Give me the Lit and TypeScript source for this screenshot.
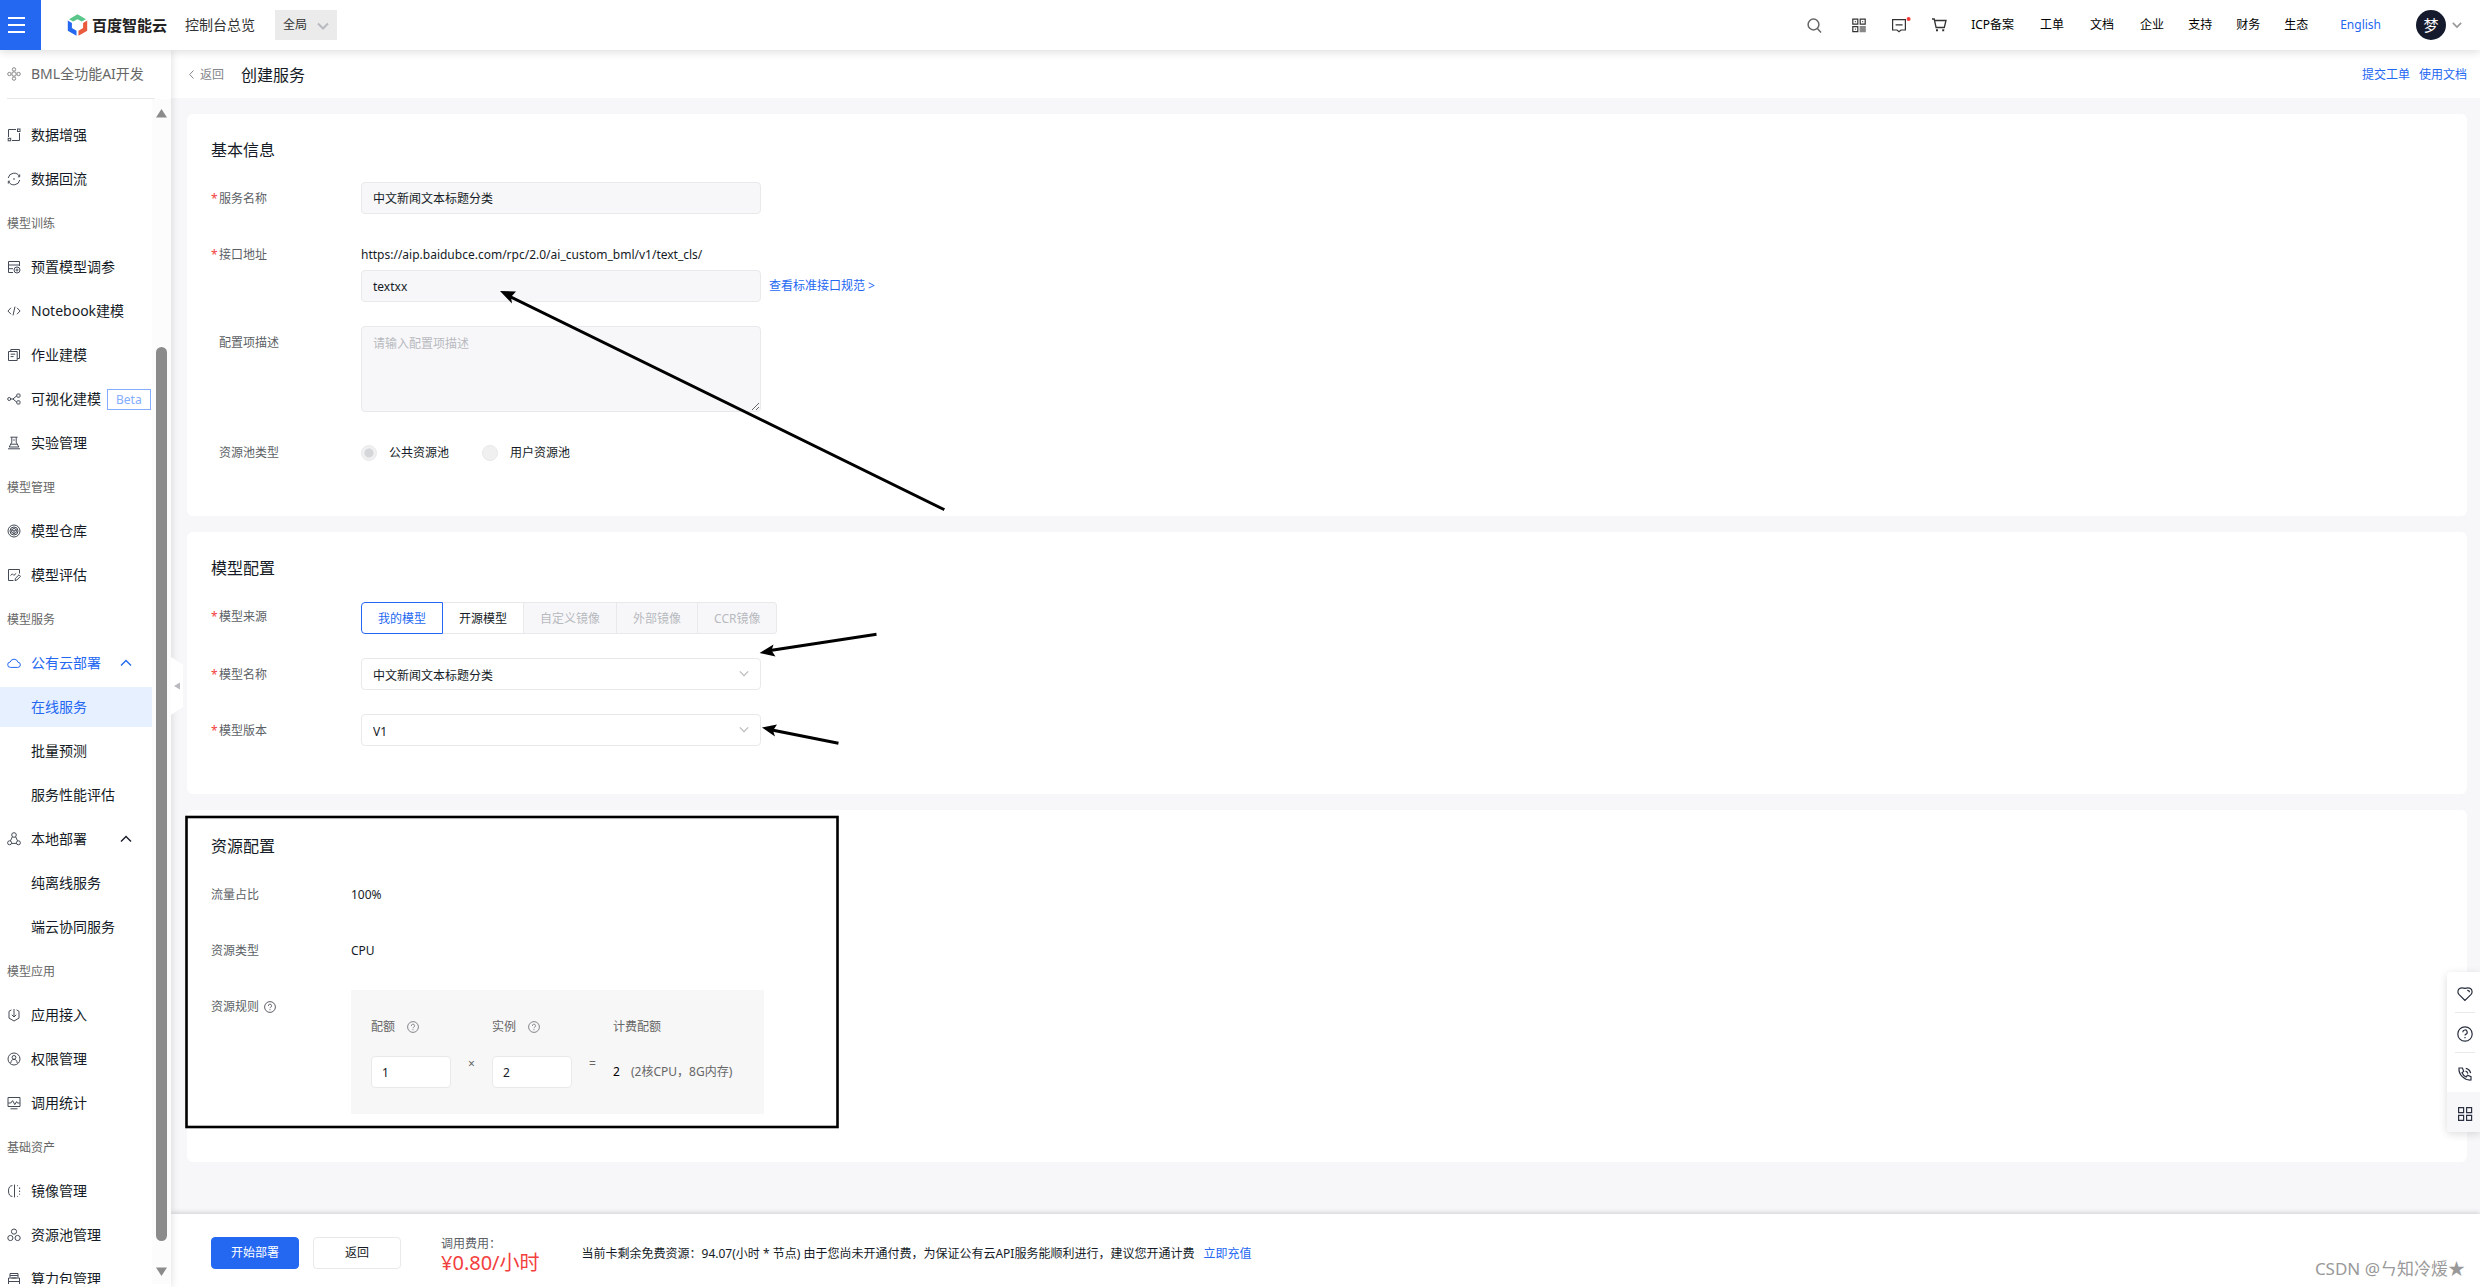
import { LitElement, html, svg, css, nothing, SVGTemplateResult } from "lit";
import { customElement, state } from "lit/decorators.js";
import { classMap } from "lit/directives/class-map.js";

type Entry = { kind: "item" | "group" | "parent" | "child"; text: string; icon?: string; tag?: string };

const MENU: Entry[] = [
  { kind: "item", text: "数据增强", icon: "augment" },
  { kind: "item", text: "数据回流", icon: "reflow" },
  { kind: "group", text: "模型训练" },
  { kind: "item", text: "预置模型调参", icon: "preset" },
  { kind: "item", text: "Notebook建模", icon: "code" },
  { kind: "item", text: "作业建模", icon: "job" },
  { kind: "item", text: "可视化建模", icon: "share", tag: "Beta" },
  { kind: "item", text: "实验管理", icon: "flask" },
  { kind: "group", text: "模型管理" },
  { kind: "item", text: "模型仓库", icon: "repo" },
  { kind: "item", text: "模型评估", icon: "evaluate" },
  { kind: "group", text: "模型服务" },
  { kind: "parent", text: "公有云部署", icon: "cloud" },
  { kind: "child", text: "在线服务" },
  { kind: "child", text: "批量预测" },
  { kind: "child", text: "服务性能评估" },
  { kind: "parent", text: "本地部署", icon: "local" },
  { kind: "child", text: "纯离线服务" },
  { kind: "child", text: "端云协同服务" },
  { kind: "group", text: "模型应用" },
  { kind: "item", text: "应用接入", icon: "access" },
  { kind: "item", text: "权限管理", icon: "user" },
  { kind: "item", text: "调用统计", icon: "chart" },
  { kind: "group", text: "基础资产" },
  { kind: "item", text: "镜像管理", icon: "mirror" },
  { kind: "item", text: "资源池管理", icon: "pool" },
  { kind: "item", text: "算力包管理", icon: "pack" },
];

/* All menu glyphs share a 14 × 14 grid. */
const GLYPHS: Record<string, SVGTemplateResult> = {
  product: svg`<rect x="5" y="5" width="4" height="4" rx="1"/><circle cx="7" cy="2.4" r="1.7"/><circle cx="7" cy="11.6" r="1.7"/><circle cx="2.4" cy="7" r="1.7"/><circle cx="11.6" cy="7" r="1.7"/>`,
  augment: svg`<path d="M1.500 9V1.500H9M5 12.500h7.500V5"/><rect x="10.500" y="1" width="2.500" height="2.500"/><rect x="1.200" y="10.300" width="2.500" height="2.500"/>`,
  reflow: svg`<path d="M1.200 6A6 6 0 0 1 12.400 4.400M12.800 8A6 6 0 0 1 1.600 9.600M12.700 2.400v2.400h-1.800M1.300 11.600V9.200h1.800"/><path d="M6 7h2" />`,
  preset: svg`<path d="M12.500 6V1.500h-11v11H6M1.500 5h11M1.500 8.700H6"/><circle cx="10" cy="10" r="3"/><circle cx="10" cy="10" r="1"/>`,
  code: svg`<path d="M4 3.800.9 7 4 10.200M10 3.800 13.100 7 10 10.200M8 2.600 6 11.400"/>`,
  job: svg`<path d="M1.500 3.500h8.700v9H1.500zM3.800 3.500v-2h8.700v9h-2.300M3.600 6.200h4.600M3.600 8.600h3"/>`,
  share: svg`<circle cx="2.200" cy="7" r="1.500"/><rect x="9.800" y="2" width="3.200" height="3.200" rx=".8"/><rect x="9.800" y="8.800" width="3.200" height="3.200" rx=".8"/><path d="M3.700 7h2.200l3.900-3.200M5.900 7l3.900 3.200"/>`,
  flask: svg`<path d="M3.400 1.200h7.200M4.800 1.200v5L2.200 11h9.600L9.200 6.200v-5M3.800 8.200h6.400M1 12.800h12M6.200 4h1.600"/>`,
  repo: svg`<circle cx="7" cy="7" r="6"/><circle cx="7" cy="7" r="4"/><path d="m7 4.400 2.300 1.300v2.600L7 9.600 4.700 8.300V5.700zM4.700 5.700 7 7l2.300-1.300M7 7v2.600"/>`,
  evaluate: svg`<path d="M12.500 5.500v-4h-11v11h5M3.600 7.600 5.300 5.800l1.500 1.600 2.400-2M8 12.600l.4-2.200L12 6.800l1.500 1.500L9.900 12z"/>`,
  cloud: svg`<path d="M3.600 11.400a2.700 2.700 0 0 1-.4-5.400 4 4 0 0 1 7.700.2 2.600 2.600 0 0 1-.3 5.200z"/>`,
  local: svg`<circle cx="7" cy="3" r="2.300"/><circle cx="2.600" cy="10.800" r="2"/><circle cx="11.400" cy="10.800" r="2"/><path d="M5.400 4.800 3.400 8.900M8.600 4.800l2 4.100M4.700 11.400h4.600"/>`,
  access: svg`<path d="M4.400 1.900 2 3.300v6.800l5 2.900 5-2.900V3.300L9.600 1.900M7 1v8M4.800 6.800 7 9l2.200-2.200"/>`,
  user: svg`<circle cx="7" cy="7" r="6"/><circle cx="7" cy="5.400" r="1.900"/><path d="M3.800 11c.2-2.400 1.300-3.600 3.200-3.600s3 1.200 3.200 3.600"/>`,
  chart: svg`<path d="M1 1.500h12v9H1zM3.500 12.800h7M1.200 7h2.600L5.600 4.600l2.200 4 1.800-3 .8 1.400h2.400"/>`,
  mirror: svg`<path d="M5.400 1.600C3 1.600 1.500 3.400 1.500 7s1.500 5.400 3.900 5.400M7.500 .6v12.800M10 1.600h.8M12.600 3.500v1.500M12.600 6.500v1.500M12.600 9.600v1M10 12.400h.8"/>`,
  pool: svg`<circle cx="7" cy="3.600" r="2.600"/><circle cx="3.400" cy="10" r="2.600"/><circle cx="10.600" cy="10" r="2.600"/>`,
  pack: svg`<path d="M3 5.500V1.500h8v4M3 3.500h8M1.500 13V6h11v7M1 9.500h12M4.500 6h5"/>`,
};

const glyph = (name: string) => html`
  <svg class="glyph" viewBox="0 0 14 14" aria-hidden="true">${GLYPHS[name]}</svg>`;

const help = () => html`
  <svg class="help" viewBox="0 0 12 12" aria-hidden="true">
    <circle cx="6" cy="6" r="5.4" />
    <path d="M4.400 4.900A1.600 1.600 0 1 1 6.500 6.300Q6 6.500 6 7.200M6 8.200v1" />
  </svg>`;

const chevron = (cls: string) => html`
  <svg class=${cls} viewBox="0 0 12 8" aria-hidden="true"><path d="M1 1.500 6 6.500 11 1.500" /></svg>`;

const base = css`
  * { box-sizing: border-box; }
  a { color: #2468f2; text-decoration: none; }
  button, input, select, textarea { font: inherit; color: inherit; margin: 0; }
  svg { display: block; flex: none; fill: none; }
`;

@customElement("top-bar")
class TopBar extends LitElement {
  static styles = [base, css`
    :host { display: flex; align-items: center; height: 50px; background: #fff; color: #151b26;
      box-shadow: 0 2px 8px rgba(7, 12, 20, .14); position: relative; z-index: 3; }
    .burger { width: 41px; height: 50px; border: 0; padding: 0 0 0 8px; background: #2468f2; }
    .burger svg { width: 17px; height: 16px; stroke: #fff; stroke-width: 2; }
    .brand { display: flex; align-items: center; gap: 4px; margin-left: 26px; color: #222; font-size: 15px; font-weight: 700; }
    .brand svg { width: 21px; height: 22px; }
    .overview { margin-left: 18px; color: #333; font-size: 14px; }
    .region { position: relative; margin-left: 20px; }
    .region select { display: block; width: 62px; height: 30px; padding: 0 8px; border: 0; border-radius: 0;
      background: #ebebeb; color: #333; appearance: none; }
    .down { width: 12px; height: 8px; stroke: #b8babf; stroke-width: 2; }
    .region .down { position: absolute; right: 8px; top: 12px; pointer-events: none; }
    .tools { display: flex; align-items: center; gap: 24px; margin-left: auto; }
    .tools button { display: block; border: 0; padding: 0; background: none; }
    .tools button svg { width: 16px; height: 16px; stroke: #333; overflow: visible; }
    .tools .find { margin-right: 5px; }
    .tools .find svg { stroke: #666; }
    .links { display: flex; gap: 26px; }
    .links.near { gap: 24px; }
    .links a { color: #000; }
    .lang { margin-left: 8px; }
    .account { display: flex; align-items: center; gap: 6px; margin: 0 18px 0 11px; }
    .avatar { width: 30px; height: 30px; line-height: 30px; border-radius: 50%; background: #151b2d; color: #fff;
      text-align: center; font-size: 15px; }
    .account .down { width: 10px; stroke: #999; }
  `];

  render() {
    return html`
      <button class="burger" aria-label="导航菜单">
        <svg viewBox="0 0 17 16"><path d="M0 1h17M0 8h17M0 15h17" /></svg>
      </button>
      <a class="brand" href="#">
        <svg viewBox="0 0 21 22" aria-hidden="true">
          <path fill="#5ac68a" d="M2 5.200 10.500.3 19 5.200 14.800 7.600 10.500 5.200 6.200 7.600z" />
          <path fill="#2468f2" d="M.8 6.600 4.900 9v5l4.600 2.700v5L.8 16.700z" />
          <path fill="#ea5a3d" d="M20.200 6.600 16.100 9v5l-4.600 2.700v5l8.700-5z" />
        </svg>
        <span>百度智能云</span>
      </a>
      <span class="overview">控制台总览</span>
      <label class="region">
        <select aria-label="区域"><option>全局</option></select>
        ${chevron("down")}
      </label>
      <nav class="tools">
        <button class="find" aria-label="搜索"><svg viewBox="0 0 16 16" stroke-width="1.5"><circle cx="7.500" cy="7.500" r="5.400" /><path d="m11.400 11.400 3.600 4" /></svg></button>
        <button aria-label="二维码"><svg viewBox="0 0 16 16" stroke-width="1.2">
          <path d="M1.800 2.200h5v5h-5zM9.200 2.200h5v5h-5zM1.800 9.600h5v5h-5zM3.900 4.700h.9M11.300 4.700h.9M3.900 12.100h.9" />
          <path fill="#888" stroke="#888" d="M9.200 9.600h5v5h-5z" /></svg></button>
        <button aria-label="消息"><svg viewBox="0 0 16 16" stroke-width="1.2">
          <path d="M1.600 2.600h12.800v10.400H10L8 14.800 6 13H1.600zM4.600 7.800h7" />
          <circle cx="17.600" cy="2" r="2" fill="#f33e3e" stroke="none" /></svg></button>
        <button aria-label="购物车"><svg viewBox="0 0 16 16" stroke-width="1.300">
          <path d="M1 2h2.200l1.900 8.500h8.200L15 3.500H3.600" />
          <path d="M5 13.300h2M11.200 13.300h2" stroke-width="2" /></svg></button>
        <span class="links">
          ${["ICP备案", "工单", "文档", "企业"].map((t) => html`<a href="#">${t}</a>`)}
        </span>
        <span class="links near">
          ${["支持", "财务", "生态"].map((t) => html`<a href="#">${t}</a>`)}
        </span>
        <a class="lang" href="#">English</a>
        <span class="account"><span class="avatar">梦</span>${chevron("down")}</span>
      </nav>`;
  }
}

@customElement("side-menu")
class SideMenu extends LitElement {
  @state() private active = "在线服务";

  static styles = [base, css`
    :host { display: flex; flex-direction: column; width: 171px; flex: none; background: #fff; color: #151b26;
      font-size: 14px; box-shadow: 0 0 8px rgba(7, 12, 20, .14); position: relative; z-index: 2; }
    .product { display: flex; align-items: center; gap: 10px; height: 49px; margin: 0 16px 0 7px;
      border-bottom: 1px solid #e8e9eb; color: #666; white-space: nowrap; }
    .glyph { width: 14px; height: 14px; stroke: #444a56; stroke-width: 1; }
    .product .glyph { stroke: #888; }
    .body { display: flex; flex: 1; min-height: 0; margin-bottom: 3px; }
    .list { flex: 1; display: flex; flex-direction: column; gap: 4px; overflow: hidden; padding-top: 16px; }
    .row { display: flex; align-items: center; flex: none; height: 40px; gap: 10px; padding-left: 7px;
      color: inherit; white-space: nowrap; }
    .group { padding-top: 2px; color: #666; font-size: 12px; }
    .child { padding-left: 31px; }
    .open, .current { color: #2468f2; }
    .open .glyph { stroke: #2468f2; }
    .current { background: #e6f0ff; }
    .fold { width: 12px; height: 8px; margin-left: auto; margin-right: 20px; stroke: currentColor; stroke-width: 1.4; transform: rotate(180deg); }
    .tag { height: 21px; line-height: 19px; padding: 0 8px; margin-left: -4px; border: 1px solid #84adff; color: #84adff; font-size: 12px; }
    .track { display: flex; flex-direction: column; align-items: center; width: 19px; padding: 10px 0 8px; background: #fcfcfc; }
    .track svg { width: 11px; height: 9px; fill: #8b8b8b; }
    .before { flex: 229; }
    .thumb { flex: 893; width: 11px; border-radius: 6px; background: #8b8b8b; }
    .after { flex: 26; }
    .handle { position: absolute; left: 100%; top: 607px; width: 12px; height: 58px; padding: 0; border: 0; background: none; }
    .handle svg { width: 12px; height: 58px; }
  `];

  private row(e: Entry) {
    if (e.kind === "group") return html`<div class="row group">${e.text}</div>`;
    const cls = classMap({
      row: true,
      child: e.kind === "child",
      current: e.text === this.active,
      open: e.text === "公有云部署",
    });
    return html`
      <a class=${cls} href="#" @click=${() => (this.active = e.text)}>
        ${e.icon ? glyph(e.icon) : nothing}<span>${e.text}</span>
        ${e.tag ? html`<span class="tag">${e.tag}</span>` : nothing}
        ${e.kind === "parent" ? chevron("fold") : nothing}
      </a>`;
  }

  render() {
    return html`
      <div class="product">${glyph("product")}<span>BML全功能AI开发</span></div>
      <div class="body">
        <nav class="list">${MENU.map((e) => this.row(e))}</nav>
        <div class="track" aria-hidden="true">
          <svg viewBox="0 0 11 9"><path d="M5.500 0 11 8.500H0z" /></svg>
          <div class="before"></div>
          <div class="thumb"></div>
          <div class="after"></div>
          <svg viewBox="0 0 11 9"><path d="M5.500 9 11 .5H0z" /></svg>
        </div>
      </div>
      <button class="handle" aria-label="收起菜单">
        <svg viewBox="0 0 12 58"><path fill="#fff" d="M0 0 12 8v42L0 58z" /><path fill="#b8babf" d="M3 29 9 25.500v7z" /></svg>
      </button>`;
  }
}

@customElement("service-form")
class ServiceForm extends LitElement {
  static styles = [base, css`
    :host { display: flex; flex-direction: column; gap: 16px; padding: 16px 13px 16px 16px; }
    .card { display: flex; flex-direction: column; gap: 24px; padding: 24px 24px 48px; border-radius: 6px; background: #fff; }
    h2 { margin: 0 0 -4px; font-size: 16px; line-height: 24px; font-weight: 400; }
    .row { display: grid; grid-template-columns: 150px 1fr; line-height: 32px; }
    .plain .row { grid-template-columns: 140px 1fr; }
    .name { height: 32px; padding-top: 1px; padding-left: 8px; color: #5c5f66; }
    .must { padding-left: 0; }
    .must::before { content: "*"; display: inline-block; width: 8px; color: #f33e3e; }
    .plain .name { display: flex; align-items: center; gap: 5px; padding-left: 0; }
    .help { width: 12px; height: 12px; stroke: #5c5f66; }
    .value { height: 32px; padding-top: 1px; }
    .box { display: block; width: 400px; max-width: 100%; height: 32px; padding: 1px 11px 0; border: 1px solid #e8e9eb; border-radius: 4px;
      background: #f7f7f9; color: #151b26; outline: none; }
    textarea.box { height: 86px; padding: 7px 11px; line-height: 20px; resize: vertical; }
    textarea::placeholder { color: #b8babf; }
    select.box { background: #fff; appearance: none; }
    .pick { display: block; position: relative; width: 400px; }
    .pick .down { position: absolute; right: 12px; top: 12px; width: 10px; height: 7px; stroke: #b8babf; stroke-width: 1.4; pointer-events: none; }
    .line { display: flex; align-items: center; gap: 8px; }
    .radios { display: flex; gap: 33px; }
    .radios label { display: flex; align-items: center; gap: 12px; height: 34px; }
    .radios input { width: 16px; height: 16px; border: 1px solid #e8e9eb; border-radius: 50%; background: #f0f0f1; appearance: none; }
    .radios input:checked { background: radial-gradient(circle, #d4d6d9 0 4px, #f0f0f1 5px); }
    .last { height: 32px; }
    .tabs { display: flex; padding-top: 2px; }
    .tabs button { height: 32px; padding: 1px 16px 0; border: 1px solid #e8e9eb; border-left-width: 0; background: #fff; line-height: 29px; }
    .tabs button.on { border: 1px solid #2468f2; border-radius: 4px 0 0 4px; color: #2468f2; }
    .tabs button:disabled { background: #f7f7f9; color: #b8babf; }
    .tabs button:last-child { border-radius: 0 4px 4px 0; }
    .rule { display: grid; grid-template-columns: 80px 41px 80px 41px auto; row-gap: 12px; width: 413px; padding: 20px 20px 26px;
      background: #f7f7f7; color: #666; line-height: 34px; }
    .head { display: flex; align-items: center; gap: 12px; }
    .head .help { stroke: #84868c; }
    .rule .box { width: 80px; padding-left: 10px; background: #fff; }
    .op { text-align: center; line-height: 16px; }
    .sum { line-height: 32px; white-space: nowrap; }
    .sum b { margin-right: 8px; color: #000; font-weight: 400; }
  `];

  render() {
    return html`
      <section class="card">
        <h2>基本信息</h2>
        <div class="row">
          <label class="name must" for="svc">服务名称</label>
          <input class="box" id="svc" value="中文新闻文本标题分类" />
        </div>
        <div class="row">
          <label class="name must" for="api">接口地址</label>
          <div>
            <div class="value">https://aip.baidubce.com/rpc/2.0/ai_custom_bml/v1/text_cls/</div>
            <div class="line"><input class="box" id="api" value="textxx" /><a href="#">查看标准接口规范 &gt;</a></div>
          </div>
        </div>
        <div class="row">
          <label class="name" for="desc">配置项描述</label>
          <textarea class="box" id="desc" placeholder="请输入配置项描述"></textarea>
        </div>
        <div class="row last">
          <span class="name" id="pool">资源池类型</span>
          <div class="radios" role="radiogroup" aria-labelledby="pool">
            <label><input type="radio" name="pool" checked disabled />公共资源池</label>
            <label><input type="radio" name="pool" disabled />用户资源池</label>
          </div>
        </div>
      </section>
      <section class="card">
        <h2>模型配置</h2>
        <div class="row">
          <span class="name must">模型来源</span>
          <div class="tabs">
            <button class="on">我的模型</button><button>开源模型</button><button disabled>自定义镜像</button><button disabled>外部镜像</button><button disabled>CCR镜像</button>
          </div>
        </div>
        <div class="row">
          <label class="name must" for="model">模型名称</label>
          <span class="pick"><select class="box" id="model"><option>中文新闻文本标题分类</option></select>${chevron("down")}</span>
        </div>
        <div class="row">
          <label class="name must" for="version">模型版本</label>
          <span class="pick"><select class="box" id="version"><option>V1</option></select>${chevron("down")}</span>
        </div>
      </section>
      <section class="card plain">
        <h2>资源配置</h2>
        <div class="row"><span class="name">流量占比</span><span class="value">100%</span></div>
        <div class="row"><span class="name">资源类型</span><span class="value">CPU</span></div>
        <div class="row">
          <span class="name">资源规则 ${help()}</span>
          <div class="rule">
            <label class="head" for="quota">配额 ${help()}</label><span></span>
            <label class="head" for="count">实例 ${help()}</label><span></span>
            <span>计费配额</span>
            <input class="box" id="quota" value="1" /><span class="op">×</span>
            <input class="box" id="count" value="2" /><span class="op">=</span>
            <span class="sum"><b>2</b> (2核CPU，8G内存)</span>
          </div>
        </div>
      </section>`;
  }
}

@customElement("app-root")
class AppRoot extends LitElement {
  static styles = [base, css`
    :host { display: flex; flex-direction: column; height: 100vh; position: relative; overflow: hidden; background: #f7f7f9; color: #151b26;
      font: 12px/20px "Noto Sans", "Noto Sans CJK SC", sans-serif; }
    .shell { display: flex; flex: 1; min-height: 0; }
    main { display: flex; flex-direction: column; flex: 1; min-width: 0; }
    .crumb { display: flex; align-items: center; height: 48px; flex: none; padding: 1px 13px 0 18px; background: #fff; }
    .back { display: flex; align-items: center; gap: 6px; color: #84868c; }
    .back svg { width: 5px; height: 9px; stroke: #84868c; }
    h1 { margin: 0 auto 0 17px; font-size: 16px; line-height: 24px; font-weight: 400; }
    .docs { display: flex; gap: 9px; }
    .scroll { flex: 1; min-height: 0; overflow: hidden; }
    footer { display: flex; align-items: center; height: 73px; flex: none; padding: 5px 40px 0; position: relative; background: #fff;
      box-shadow: 0 -1px 5px rgba(7, 12, 20, .18); }
    footer button { width: 88px; height: 32px; border: 1px solid #e8e9eb; border-radius: 4px; padding: 0; background: #fff; }
    footer .go { margin-right: 14px; border-color: #2468f2; background: #2468f2; color: #fff; }
    .fee { display: flex; flex-direction: column; margin: 0 42px 0 40px; padding-top: 4px; line-height: 16px; color: #5c5f66; }
    .fee strong { font-size: 20px; line-height: 22px; font-weight: 400; color: #f33e3e; }
    .note { padding-top: 2px; }
    .note a { margin-left: 6px; }
    .mark { position: absolute; right: 15px; bottom: 8px; font-size: 17px; color: #999; }
    .float { position: absolute; right: 0; top: 972px; width: 33px; padding: 0; z-index: 4; background: #fff; border-radius: 4px 0 0 4px;
      box-shadow: 0 2px 8px rgba(7, 12, 20, .14); overflow: hidden; }
    .float button { display: grid; place-items: center; width: 33px; height: 40px; padding: 4px 0 0 3px; border: 0; background: none; }
    .float svg { width: 16px; height: 16px; stroke: #2a3040; stroke-width: 1.2; }
    .float button:last-child { background: #f7f7f9; }
    .float hr { width: 20px; height: 1px; margin: 0 5px -1px 8px; border: 0; background: #e8e9eb; }
    .notes { position: absolute; inset: 0; width: 100%; height: 100%; z-index: 5; pointer-events: none; }
  `];

  render() {
    return html`
      <top-bar></top-bar>
      <div class="shell">
        <side-menu></side-menu>
        <main>
          <div class="crumb">
            <a class="back" href="#"><svg viewBox="0 0 5 9"><path d="M4.500.5.7 4.500l3.800 4" /></svg>返回</a>
            <h1>创建服务</h1>
            <div class="docs"><a href="#">提交工单</a><a href="#">使用文档</a></div>
          </div>
          <div class="scroll"><service-form></service-form></div>
          <footer>
            <button class="go">开始部署</button>
            <button>返回</button>
            <div class="fee"><span>调用费用：</span><strong>¥0.80/小时</strong></div>
            <div class="note">当前卡剩余免费资源：94.07(小时 * 节点) 由于您尚未开通付费，为保证公有云API服务能顺利进行，建议您开通计费 <a href="#">立即充值</a></div>
            <div class="mark">CSDN @ㄣ知冷煖★</div>
          </footer>
        </main>
      </div>
      <aside class="float">
        <button aria-label="收藏"><svg viewBox="0 0 16 16"><path d="M8 14.500 1.900 8.300C.3 6.500.8 3.800 2.500 2.600 4.300 1.400 6.400 1.800 8 2.400c1.600-.6 3.700-1 5.500.2 1.700 1.200 2.200 3.900.6 5.700zM10.200 4.300c1.400-.1 2.200.7 2.200 2" /></svg></button>
        <hr />
        <button aria-label="帮助"><svg viewBox="0 0 16 16"><circle cx="8" cy="8" r="7.200" /><path d="M5.800 6.200A2.200 2.200 0 1 1 8.600 8.300Q8 8.500 8 9.600M8 11v1.200" /></svg></button>
        <hr />
        <button aria-label="电话"><svg viewBox="0 0 16 16"><path d="M2 2h3.400l1.300 3.400L5 6.800c.8 1.900 2.200 3.300 4.100 4.200l1.500-1.700 3.400 1.300V14C7.400 14.600 1.400 8.600 2 2zM8.500 5.200a3 3 0 0 1 2.400 2.400M8.800 2.300a6 6 0 0 1 4.800 4.800" /></svg></button>
        <button aria-label="应用"><svg viewBox="0 0 16 16"><path d="M1.600 1.600h5v5h-5zM9.600 1.600h5v5h-5zM1.600 9.400h5v5h-5zM9.600 9.400h5v5h-5z" /></svg></button>
      </aside>
      <svg class="notes" aria-hidden="true">
        <g stroke="#000" stroke-width="3" stroke-linecap="square">
          <path d="M512 297.500 943 509M770 650.500 875 634.500M772 730 837 743" />
          <rect x="186.500" y="817" width="651" height="310" stroke-width="2.600" />
        </g>
        <g fill="#000">
          <path d="M500 291 516 291.500 511 297 512 303.500z" />
          <path d="M759.600 653 773.500 644.500 771.500 650.500 775.500 656.500z" />
          <path d="M762 727.500 777 724.500 773 730.500 775 736.500z" />
        </g>
      </svg>`;
  }
}
